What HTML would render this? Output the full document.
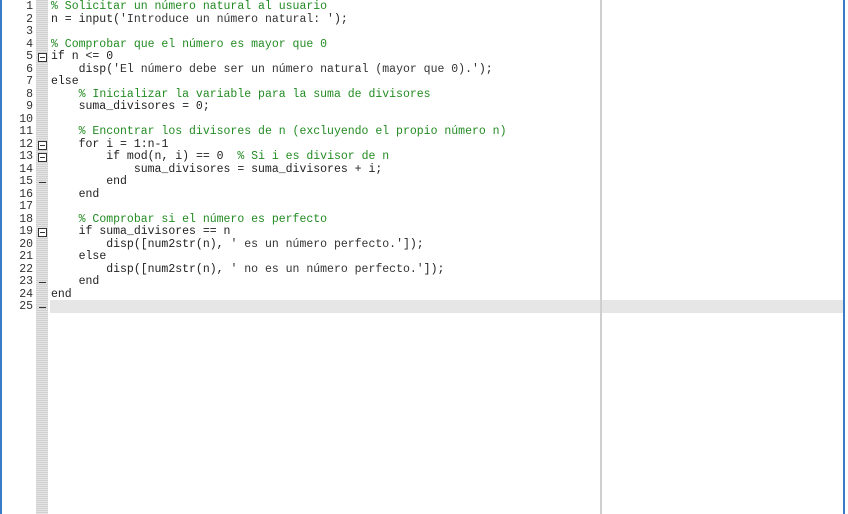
<!DOCTYPE html>
<html><head><style>
body{margin:0;width:848px;height:514px;background:#fff;overflow:hidden;position:relative;font-family:"Liberation Mono",monospace;}
.lb{position:absolute;left:0;top:0;width:2px;height:514px;background:#3a7bc8}
.rb{position:absolute;left:843px;top:0;width:2px;height:514px;background:#3a7bc8}
.strip{position:absolute;left:36px;top:0;width:12px;height:514px;background:repeating-linear-gradient(0deg,#e4e4e4 0 1px,#d0d0d0 1px 2px)}
.vl{position:absolute;left:600px;top:0;width:2px;height:514px;background:#cfcfcf}
.hl{position:absolute;left:50px;top:300px;width:793px;height:13px;background:#e6e6e6}
.nums{position:absolute;left:0;top:1px;width:33px;text-align:right;font-size:11.5px;line-height:12.5px;color:#333;white-space:pre}
.code{position:absolute;left:51px;top:1px;font-size:11.5px;line-height:12.5px;color:#222;white-space:pre}
.fold{position:absolute;left:38px;width:7px;height:7px;border:1px solid #333;background:#fff}
.fold:after{content:"";position:absolute;left:1px;top:3px;width:5px;height:1px;background:#333}
.dash{position:absolute;left:39px;width:7px;height:1px;background:#333}
.k{color:#222}.s{color:#333}.c{color:#228b22}
</style></head><body>
<div class="strip"></div><div class="hl"></div><div class="vl"></div><div class="lb"></div><div class="rb"></div>
<div class="nums">1
2
3
4
5
6
7
8
9
10
11
12
13
14
15
16
17
18
19
20
21
22
23
24
25</div>
<div class="fold" style="top:53px;left:38px"></div>
<div class="fold" style="top:141px"></div>
<div class="fold" style="top:153px"></div>
<div class="fold" style="top:228px"></div>
<div class="dash" style="top:182px"></div>
<div class="dash" style="top:282px"></div>
<div class="dash" style="top:307px"></div>
<div class="code"><span class="c">% Solicitar un número natural al usuario</span>
n = input(<span class="s">'Introduce un número natural: '</span>);

<span class="c">% Comprobar que el número es mayor que 0</span>
<span class="k">if</span> n &lt;= 0
    disp(<span class="s">'El número debe ser un número natural (mayor que 0).'</span>);
<span class="k">else</span>
    <span class="c">% Inicializar la variable para la suma de divisores</span>
    suma_divisores = 0;

    <span class="c">% Encontrar los divisores de n (excluyendo el propio número n)</span>
    <span class="k">for</span> i = 1:n-1
        <span class="k">if</span> mod(n, i) == 0  <span class="c">% Si i es divisor de n</span>
            suma_divisores = suma_divisores + i;
        <span class="k">end</span>
    <span class="k">end</span>

    <span class="c">% Comprobar si el número es perfecto</span>
    <span class="k">if</span> suma_divisores == n
        disp([num2str(n), <span class="s">' es un número perfecto.'</span>]);
    <span class="k">else</span>
        disp([num2str(n), <span class="s">' no es un número perfecto.'</span>]);
    <span class="k">end</span>
<span class="k">end</span>
</div>
</body></html>
